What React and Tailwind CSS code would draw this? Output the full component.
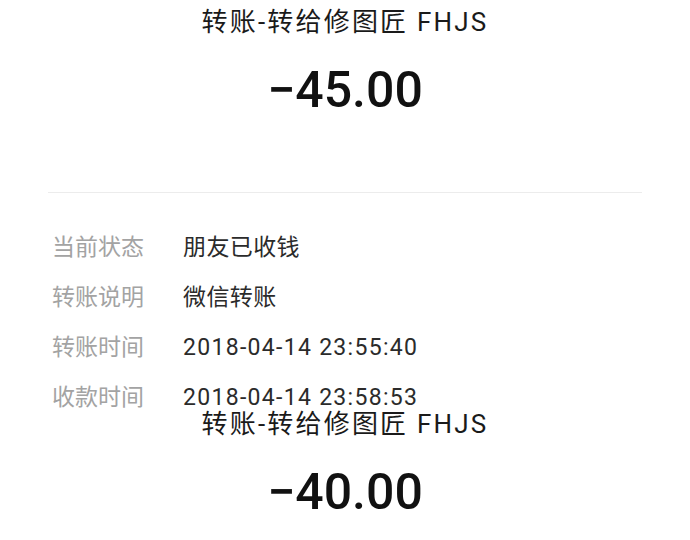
export default function App() {
  const rows = [
    { label: '当前状态', value: '朋友已收钱' },
    { label: '转账说明', value: '微信转账' },
    { label: '转账时间', value: '2018-04-14 23:55:40', date: true },
    { label: '收款时间', value: '2018-04-14 23:58:53', date: true },
  ];

  return (
    <div
      className="w-[690px] h-[540px] bg-white overflow-hidden"
      style={{ fontFamily: 'Roboto, "Noto Sans CJK SC", sans-serif' }}
    >
      {/* first transfer */}
      <div className="pt-[7px] text-center">
        <h1 className="text-[26px] leading-[30px] tracking-[2.2px] text-[#1a1a1a]">转账-转给修图匠 FHJS</h1>
        <p className="mt-[28px] text-[50px] leading-[50px] font-medium text-[#111]">−45.00</p>
      </div>

      <div className="mx-[48px] mt-[77px] border-t border-[#ececec]" />

      <div className="mt-[30px] pl-[52px]">
        {rows.map((row) => (
          <div key={row.label} className="flex items-center h-[50px] text-[23px]">
            <span className="w-[131px] text-[#a3a3a3]">{row.label}</span>
            <span className={row.date ? 'text-[#2b2b2b] tracking-[1.3px]' : 'text-[#2b2b2b] tracking-[0.4px]'}>
              {row.value}
            </span>
          </div>
        ))}
      </div>

      {/* second transfer, pasted under the first */}
      <div className="-mt-[14px] text-center">
        <h1 className="text-[26px] leading-[30px] tracking-[2.2px] text-[#1a1a1a]">转账-转给修图匠 FHJS</h1>
        <p className="mt-[28px] text-[50px] leading-[50px] font-medium text-[#111]">−40.00</p>
      </div>
    </div>
  );
}
